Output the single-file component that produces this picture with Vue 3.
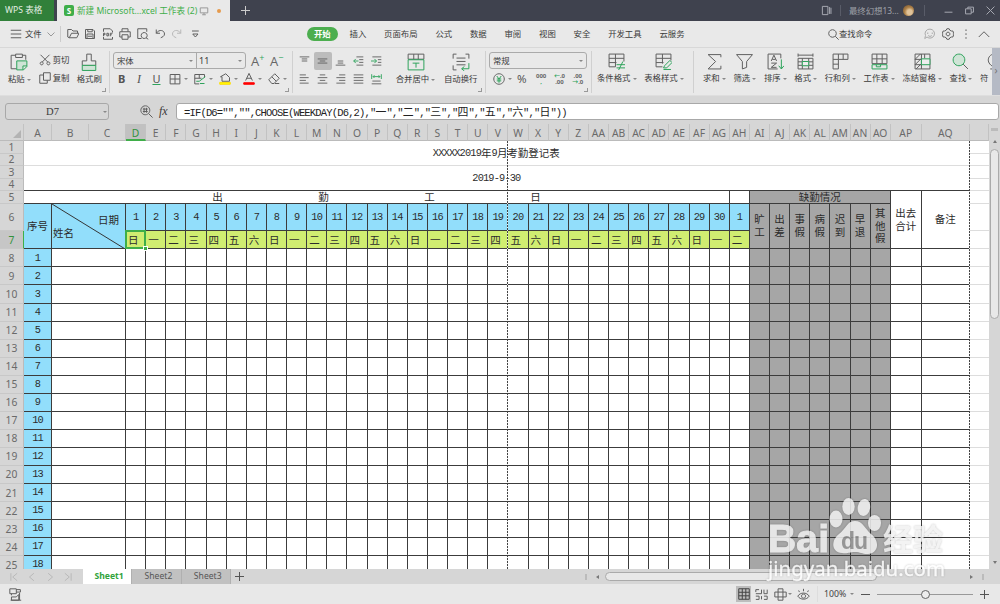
<template>
    <div class="app">
        <header class="title-bar">
            <div class="brand">WPS 表格</div>
            <div class="doc-tab">
                <span class="doc-logo">S</span>
                <span class="doc-name">新建 Microsoft...xcel 工作表 (2)</span>
                <Icon name="monitor" :size="10" />
                <i class="dirty"></i>
            </div>
            <span class="new-tab"></span>
            <div class="window-tools">
                <Icon name="panel" :size="11" />
                <i class="bar"></i>
                <span class="user">最终幻想13...</span>
                <span class="avatar"></span>
                <i class="bar"></i>
                <Icon name="minimize" :size="9" />
                <Icon name="restore" :size="9" />
                <Icon name="close" :size="9" />
            </div>
        </header>

        <nav class="menu">
            <div class="file">
                <Icon name="menu" :size="12" />
                <span>文件</span>
                <Icon name="down" :size="8" />
            </div>
            <div class="quick">
                <Icon v-for="name in quickIcons" :key="name" :name="name" :size="12" />
            </div>
            <div class="menu-tabs">
                <span v-for="tab, index in menuTabs" :key="tab" :class="{ active: index === 0 }">{{ tab }}</span>
            </div>
            <div class="search">
                <Icon name="search" :size="11" />
                <span>查找命令</span>
            </div>
            <div class="menu-right">
                <Icon v-for="name in ['chat', 'gear', 'dots', 'up']" :key="name" :name="name" :size="12" />
            </div>
        </nav>

        <section class="ribbon">
            <div class="group clipboard">
                <div class="big">
                    <Icon name="paste" :size="18" />
                    <span class="label">粘贴<b class="caret"></b></span>
                </div>
                <div class="stack">
                    <span><Icon name="cut" :size="12" />剪切</span>
                    <span><Icon name="copy" :size="12" />复制</span>
                </div>
                <div class="big">
                    <Icon name="brush" :size="18" />
                    <span class="label">格式刷</span>
                </div>
                <i class="corner"></i>
            </div>

            <div class="group fonts">
                <div class="line">
                    <div class="select">
                        <span class="family">宋体<b class="caret"></b></span>
                        <span class="font-size">11<b class="caret"></b></span>
                    </div>
                    <span class="grow">A<sup>+</sup></span>
                    <span class="grow">A<sup>−</sup></span>
                </div>
                <div class="line second">
                    <span class="fmt bold">B</span>
                    <span class="fmt italic">I</span>
                    <span class="fmt under">U</span>
                    <span v-for="name in ['border', 'fillpen', 'bucket', 'fontcolor', 'eraser']" :key="name" class="drop">
                        <Icon :name="name" :size="12" /><b class="caret"></b>
                    </span>
                </div>
                <i class="corner"></i>
            </div>

            <div class="group aligns">
                <div class="align-grid">
                    <span v-for="name in alignIcons" :key="name" :class="{ active: name === 'vmiddle' }">
                        <Icon :name="name" :size="12" />
                    </span>
                </div>
                <div class="big merge">
                    <Icon name="merge" :size="18" />
                    <span class="label">合并居中<b class="caret"></b></span>
                </div>
                <div class="big">
                    <Icon name="wrap" :size="18" />
                    <span class="label">自动换行</span>
                </div>
                <i class="corner"></i>
            </div>

            <div class="group numbers">
                <div class="select number-select"><span>常规<b class="caret"></b></span></div>
                <div class="number-line">
                    <Icon name="yen" :size="12" /><b class="caret"></b>
                    <span class="percent">%</span>
                    <span class="digits"><em class="dark">000</em><em>,</em></span>
                    <span class="digits"><em>←<u>.0</u></em><em class="dark">.00</em></span>
                    <span class="digits"><em class="dark">.00</em><em>→<u>.0</u></em></span>
                </div>
                <i class="corner"></i>
            </div>

            <div class="group styles">
                <div v-for="tool in styleTools" :key="tool.text" class="big tool">
                    <Icon :name="tool.icon" :size="17" />
                    <span class="label">{{ tool.text }}<b class="caret"></b></span>
                </div>
            </div>

            <div class="group edit">
                <div v-for="tool in editTools" :key="tool.text" class="big tool">
                    <Icon :name="tool.icon" :size="17" />
                    <span class="label">{{ tool.text }}<b class="caret"></b></span>
                </div>
                <div class="big cut-off">
                    <Icon name="symbol" :size="17" />
                    <span class="label">符</span>
                </div>
            </div>
            <div class="more">›</div>
        </section>

        <section class="formula-bar">
            <div class="name-box"><span>D7</span><b class="caret"></b></div>
            <Icon name="find" :size="13" />
            <span class="fx">fx</span>
            <div class="formula">
                <span v-for="run, index in runs(formula)" :key="index" :class="run.kind">{{ run.text }}</span>
            </div>
        </section>

        <main class="sheet-area">
            <div class="sheet">
                <div class="col-head select-all"><i></i></div>
                <div v-for="name in columns" :key="name" class="col-head" :class="{ current: name === 'D' }">{{ name }}</div>
                <div class="col-head"></div>

                <div v-for="row in 25" :key="'r' + row" class="row-head" :class="{ current: row === 7 }"
                    :style="area(row, 0)">{{ row }}</div>
                <div v-for="row in 25" :key="'e' + row" class="rest" :style="area(row, 44)"></div>

                <div v-for="cell, index in cells" :key="'c' + index" class="cell" :class="cell.type"
                    :style="area(cell.row, cell.col, cell.rows, cell.cols)">
                    <template v-if="cell.text">
                        <span v-for="run, i in runs(cell.text)" :key="i" :class="run.kind">{{ run.text }}</span>
                    </template>
                </div>

                <div class="cell blue slash" :style="area(6, 2, 2, 2)">
                    <svg viewBox="0 0 73 46" preserveAspectRatio="none">
                        <path d="M0 0L73 46" stroke="#333" fill="none" />
                    </svg>
                    <span class="full date">日期</span>
                    <span class="full name">姓名</span>
                </div>
                <div class="cursor" :style="area(7, 4)"><i></i></div>
                <div class="page-break" :style="area(1, 22, 25, 1)"></div>
                <div class="page-break" :style="area(1, 43, 25, 1)"></div>
            </div>
            <div class="vscroll">
                <i class="split"></i>
                <i class="arrow-up"></i>
                <i class="thumb"></i>
                <i class="arrow-down"></i>
            </div>
        </main>

        <section class="tab-bar">
            <div class="tab-nav">
                <Icon v-for="name in ['first', 'prev', 'next', 'last']" :key="name" :name="name" :size="10" />
            </div>
            <span v-for="n in 3" :key="n" class="sheet-tab" :class="{ active: n === 1 }">Sheet{{ n }}</span>
            <span class="add-sheet"></span>
            <div class="hscroll">
                <i class="grip"></i>
                <i class="arrow-left"></i>
                <i class="thumb"></i>
                <i class="arrow-right"></i>
                <i class="grip"></i>
            </div>
        </section>

        <footer class="status">
            <Icon name="macro" :size="13" />
            <div class="views">
                <span class="active"><Icon name="normal" :size="12" /></span>
                <Icon name="pages" :size="13" />
                <Icon name="layout" :size="13" />
                <b class="caret"></b>
                <Icon name="eye" :size="13" />
            </div>
            <div class="zoom">
                <span>100%</span>
                <b class="caret"></b>
                <i class="minus"></i>
                <div class="slider"><i></i></div>
                <i class="plus"></i>
            </div>
        </footer>

        <svg class="watermark" viewBox="0 0 190 96" width="190" height="96">
            <g fill="#f2f2f2">
                <text x="5" y="62" font-size="39" font-weight="bold" font-family="Liberation Sans, sans-serif"
                    textLength="61" stroke="#f2f2f2">Bai</text>
                <ellipse cx="73" cy="29" rx="6.5" ry="8.5" />
                <ellipse cx="85.500" cy="16.500" rx="6.2" ry="8.5" />
                <ellipse cx="101" cy="17.500" rx="6.2" ry="8.5" transform="rotate(10 101 17)" />
                <ellipse cx="111.500" cy="33" rx="6.5" ry="8" />
                <path d="M92 31C100 31 102 39 108 44C117 51 116 63 105 64C98 64 98 62 92 62C86 62 85 64 79 63C68 62 68 50 76 44C83 39 84 31 92 31Z" />
                <text x="120" y="60" font-size="30" font-weight="bold" font-family="Noto Sans CJK SC, sans-serif"
                    textLength="60">经验</text>
                <text x="5" y="86" font-size="20" font-family="Noto Sans, sans-serif" textLength="177"
                    lengthAdjust="spacingAndGlyphs" fill="#fff" stroke="#fff" stroke-width=".3">jingyan.baidu.com</text>
            </g>
            <text x="78" y="59" font-size="23" font-weight="bold" font-family="Liberation Sans, sans-serif"
                textLength="27" fill="#949494">du</text>
        </svg>
    </div>
</template>

<script setup>
import { h } from 'vue';

const G = '#2fa35c';
const K = '#606060';
const LIGHT = '#b9b9b9';

// each entry is a list of [path, stroke, fill], drawn on a 16x16 box
const icons = {
    monitor: [['M2 3h12v8h-12zM8 11v3M5 14h6', '#999']],
    panel: [['M2 2h8v12h-8zM12.500 3v10M14.500 4v9', '#a5a7b0']],
    minimize: [['M1 11h14', '#a5a7b0']],
    restore: [['M1 5h10v9h-10zM5 5v-3h10v9h-4', '#a5a7b0']],
    close: [['M1 1l14 14M15 1l-14 14', '#a5a7b0']],
    menu: [['M1 3h14M1 8h14M1 13h14', K]],
    down: [['M1 5l7 7l7-7', '#999']],
    up: [['M1 12l7-7l7 7', K]],
    open: [['M3 13l-2-1v-10h5l2 2h6v3M3 13l3-6h10l-3 6z', K]],
    save: [['M2 2h10l2 2v10h-12zM5 2v3h6v-3M4 14v-6h8v6M5 11h6', K]],
    pdf: [['M2 5v-4h9l3 3v2M2 12v3h12v-3', K], ['M2 11v-4h2v2h-2M6.500 7v3.500h2v-3.500zM11 11v-4h3M11 9h2', K]],
    print: [['M4 5v-4h8v4M4 12h-3v-7h14v7h-3M4 9h8v6h-8z', K]],
    preview: [['M6 14h-5v-13h12v4', K], ['M9.500 6a4 4 0 1 0 .1 0M12 13l3 2', K]],
    undo: [['M3 2v5h5M3 7c4-6 11-4 11 1c0 3-3 4-5 5', K]],
    redo: [['M13 2v5h-5M13 7c-4-6-11-4-11 1c0 3 3 4 5 5', LIGHT]],
    custom: [['M4 4h9M5 8l3.500 4l3.500-4z', K]],
    search: [['M6.500 1a5.500 5.500 0 1 0 .1 0M10.500 10.500l5 5', K]],
    chat: [['M8 1.500a6 6 0 1 1-4 10.500l-3 2l1-4a6 6 0 0 1 6-8.500M5 6v2M11 6v2M5.500 10c1.500 1.500 3.500 1.500 5 0', '#aaa']],
    gear: [['M6.500 1h3l1 2l2 1l2 0l1 3l-1 1l1 1l-1 3h-2l-2 1l-1 2h-3l-1-2l-2-1h-2l-1-3l1-1l-1-1l1-3h2l2-1zM8 5.500a2.500 2.500 0 1 0 .1 0', K]],
    dots: [['M8 2v1.800M8 7.200v1.800M8 12.400v1.800', '#444']],
    paste: [['M6 14h-5v-12h4M11 2h3v4M5 1h6v3h-6z', K], ['M6 7h9v5l-3 3h-6zM15 11.500h-3.500v3.500', G, '#cfe4d6']],
    cut: [['M2 1l10 10M14 1l-10 10M3.500 10.500a2 2 0 1 0 .1 0M12.500 10.500a2 2 0 1 0 .1 0', K]],
    copy: [['M6 1h9v10h-9zM6 4h-5v11h10v-4', K]],
    brush: [['M6 7v-6h4v6h4v4h-12v-4z', K], ['M2 11h12v4.500h-12z', G, '#cfe4d6']],
    border: [['M1.500 2h13v12.500h-13zM8 2v12.500M1.500 8h13', K]],
    fillpen: [['M14 6v-4h-13v12.500h6M1 7h9M7 2v5', K], ['M3 11h4l8-6M8 14h6', G]],
    bucket: [['M4 11v-6h-2l7-4l5 5v5z', K], ['M1 12.500h14v2.500h-14z', '#fd0', '#ff0']],
    fontcolor: [['M3.500 10l4.500-9.500l4.500 9.500M5 7h6', K], ['M1 13h14v2h-14z', '#f00', '#f00']],
    eraser: [['M1 9l8-8l6 6l-7 7h-3zM5 5l6 6M9 14h6', K]],
    vtop: [['M1 2h14M4 5h8M4 8h8', K]],
    vmiddle: [['M1 5h14M4 8h8M1 11h14', K]],
    vbottom: [['M4 8h8M4 11h8M1 14h14', K]],
    outdent: [['M5 2h10M9 6h6M9 10h6M5 14h10', K], ['M1 8h7M4 5l-3 3l3 3', G]],
    indent: [['M2 2h13M10 6h5M10 10h5M2 14h13', K], ['M0 8h8M5 5l3 3l-3 3', G]],
    left: [['M1 2h9M1 6h13M1 10h9M1 14h13', K]],
    center: [['M4 2h8M1 6h14M4 10h8M1 14h14', K]],
    right: [['M6 2h9M2 6h13M6 10h9M2 14h13', K]],
    justify: [['M1 2h14M1 6h14M1 10h14M1 14h14', K]],
    spread: [['M2 11h12M1 15h14', K], ['M1 1v7M15 1v7M3 4.500h10M5 2.500l-2 2l2 2M11 2.500l2 2l-2 2', G]],
    merge: [['M1 5.500v-4.500h14v4.500M1 5.500h14M6 1v4.500M10 1v4.500', K], ['M1 6h14v9h-14zM5 9h6M8 9v4', G]],
    wrap: [['M4 1h-3v4M12 1h3v4M1 11v4h3M4 4.500h8M4 7.500h8M4 10.500h8', K], ['M15 9v5h-6M11 12l-2.500 2l2.500 2', G]],
    yen: [['M8 1a7 7 0 1 0 .1 0', K], ['M5 4l3 4l3-4M8 8v5M5 8h6M5 10.500h6', G]],
    cond: [['M7 13h-6v-12h14v7M1 5h14M7 1v12M1 9h7', K], ['M8 11h8M8 14h8M14 8l-4 8', G]],
    style: [['M7 13h-6v-12h14v6M1 5h14M1 9h7M7 1v9', K], ['M9 12l5-5l2 2l-5 5h-3zM8 15.500h7', G]],
    sum: [['M14 4v-2.500h-12l7 6.500l-7 7h12v-3', K]],
    filter: [['M.5 1.500h15l-5.500 6.500v5.500l-4 1.500v-7z', K]],
    sort: [['M10 15h-9v-14h12v4M4 7.500l2.500-5.500l2.500 5.500M5 6h3M4 9.500h5l-5 4h5', K], ['M13.500 6v9M11 12l2.500 3l2.500-3', G]],
    format: [['M1 .5v3M15 .5v3M1 2h14M1 5h14v10h-14zM1 8.300h14M1 11.600h14M5 5v10M11 5v10', K], ['M5 8h6v4h-6z', G, '#eee']],
    rowcol: [['M1 1h14v5h-9v9h-5zM1 6h5v-5M10.500 1v5M1 10.500h5', K]],
    worksheet: [['M1 10v-9h14v9zM1 5.500h14M5.500 1v9M10.500 1v9', K], ['M1 11h14v4h-14zM5 11v2h4v-2', G]],
    freeze: [['M1 1h14v14h-14zM7 1v14M10 1v4M1 6h6M1 11h6M1 6l5-5M1 11l6-6M2 15l5-5', K], ['M7 5.500h8v5.500h-8z', G, '#eee']],
    lookup: [['M10.500 10.500l4.500 4.500', K], ['M6.500 1a5.500 5.500 0 1 0 .1 0', G, '#cfe4d6']],
    symbol: [['M4 15h3v-2c-8-4-5-12 1-12c7 0 9 8 1 12v2h3', K]],
    find: [['M6.500 1a5.500 5.500 0 1 0 .1 0M10.500 10.500l5 5M3.500 5h6M3.500 8h6M5 3.500v6M8 3.500v6', K]],
    first: [['M3 2v12M13 2l-7 6l7 6', LIGHT]],
    prev: [['M11 2l-7 6l7 6', LIGHT]],
    next: [['M5 2l7 6l-7 6', LIGHT]],
    last: [['M13 2v12M3 2l7 6l-7 6', LIGHT]],
    macro: [['M1 1h8v6h-8zM9 2h5v3h-5M3 7v2M3 11h6l3-3v7h-9zM13 6v9M2 15h13', K]],
    normal: [['M1 1h14v14h-14zM1 5.700h14M1 10.400h14M5.700 1v14M10.400 1v14', '#444']],
    pages: [['M1 5v-3h4M8 2v5h-7M11 2v5h4M15 2v5M1 10h4v4h-4M8 10v4M11 10h4v4h-4', K]],
    layout: [['M5 1h6v14h-6zM1 5h14v6h-14z', K]],
    eye: [['M1 10c3-5 11-5 14 0c-3 5-11 5-14 0M8 7.500a2.500 2.500 0 1 0 .1 0M3 5l-1-2M8 4v-3M13 5l1-2', K]]
};

const Icon = (props) => h(
    'svg',
    { viewBox: '0 0 16 16', width: props.size, height: props.size, style: { flex: 'none' } },
    icons[props.name].map(([d, stroke, fill]) => h('path', {
        d,
        stroke,
        fill: fill || 'none',
        'stroke-width': 16 / props.size
    }))
);
Icon.props = ['name', 'size'];

const quickIcons = ['open', 'save', 'pdf', 'print', 'preview', 'undo', 'redo', 'custom'];
const menuTabs = ['开始', '插入', '页面布局', '公式', '数据', '审阅', '视图', '安全', '开发工具', '云服务'];
const alignIcons = ['vtop', 'vmiddle', 'vbottom', 'outdent', 'indent', 'left', 'center', 'right', 'justify', 'spread'];
const styleTools = [
    { text: '条件格式', icon: 'cond' },
    { text: '表格样式', icon: 'style' }
];
const editTools = [
    { text: '求和', icon: 'sum' },
    { text: '筛选', icon: 'filter' },
    { text: '排序', icon: 'sort' },
    { text: '格式', icon: 'format' },
    { text: '行和列', icon: 'rowcol' },
    { text: '工作表', icon: 'worksheet' },
    { text: '冻结窗格', icon: 'freeze' },
    { text: '查找', icon: 'lookup' }
];

const formula = '=IF(D6="","",CHOOSE(WEEKDAY(D6,2),"一","二","三","四","五","六","日"))';
const week = ['日', '一', '二', '三', '四', '五', '六'];

// A..AQ
const columns = Array.from({ length: 43 }, (_, i) => {
    const letter = String.fromCharCode(65 + i % 26);
    return i < 26 ? letter : 'A' + letter;
});

// half-width and full-width characters get different fonts
function runs(text) {
    return (text.match(/[\x20-\x7e]+|[^\x20-\x7e]+/g) || []).map((part) => ({
        text: part,
        kind: part.charCodeAt(0) < 127 ? 'half' : 'full'
    }));
}

function area(row, col, rows = 1, cols = 1) {
    return {
        gridRow: `${row + 1} / span ${rows}`,
        gridColumn: `${col + 1} / span ${cols}`
    };
}

const cells = [
    { row: 1, col: 1, rows: 2, cols: 43, type: 'plain', text: 'XXXXX2019年9月考勤登记表' },
    { row: 3, col: 1, rows: 2, cols: 43, type: '', text: '2019-9-30' },
    { row: 5, col: 1, cols: 33, type: 'spaced', text: '出 勤 工 日' },
    { row: 5, col: 34, type: '' },
    { row: 5, col: 35, cols: 7, type: 'gray', text: '缺勤情况' },
    { row: 5, col: 42, rows: 3, type: 'two', text: '出去合计' },
    { row: 5, col: 43, rows: 3, type: '', text: '备注' },
    { row: 6, col: 1, rows: 2, type: 'blue', text: '序号' }
];
for (let i = 0; i < 31; i++) {
    cells.push({ row: 6, col: 4 + i, type: 'blue', text: String(i === 30 ? 1 : i + 1) });
    cells.push({ row: 7, col: 4 + i, type: 'lime', text: week[i % 7] });
}
['旷工', '出差', '事假', '病假', '迟到', '早退', '其他假'].forEach((text, i) => {
    cells.push({ row: 6, col: 35 + i, rows: 2, type: 'gray vertical', text });
});
for (let row = 8; row <= 25; row++) {
    cells.push({ row, col: 1, type: 'blue', text: String(row - 7) });
    cells.push({ row, col: 2, cols: 2, type: '' });
    for (let col = 4; col <= 43; col++) {
        cells.push({ row, col, type: col >= 35 && col <= 41 ? 'gray' : '' });
    }
}
</script>

<style>
body {
    overflow: hidden;
}
</style>

<style scoped>
.app {
    position: relative;
    width: 1000px;
    height: 604px;
    display: flex;
    flex-direction: column;
    overflow: hidden;
    background: #d6d6d6;
    color: #3a3a3a;
    font-family: "Noto Sans", "Noto Sans CJK SC", sans-serif;
    font-size: 8.4px;
    line-height: 12px;
    white-space: nowrap;
}

.caret {
    display: inline-block;
    flex: none;
    border: 2px solid transparent;
    border-top-color: #888;
    border-bottom: 0;
    vertical-align: middle;
}

/* title bar */
.title-bar {
    height: 21px;
    flex: none;
    display: flex;
    align-items: center;
    background: #3f424e;
}

.brand {
    width: 49px;
    padding-left: 5px;
    line-height: 21px;
    background: #31803a;
    color: #e4efe4;
    font-size: 8.6px;
}

.doc-tab {
    width: 166px;
    height: 21px;
    margin-left: 3px;
    padding-left: 7px;
    display: flex;
    align-items: center;
    background: #e9e9e9;
    color: #3fae49;
    font-size: 8.6px;
}

.doc-logo {
    width: 10px;
    height: 11px;
    margin-right: 3px;
    border-radius: 2px;
    background: #3fae49;
    color: #fff;
    text-align: center;
    font-size: 8px;
    font-weight: bold;
    line-height: 11px;
}

.doc-name {
    width: 122px;
}

.dirty {
    width: 4px;
    height: 4px;
    margin-left: 8px;
    border-radius: 50%;
    background: #e69a4c;
}

.new-tab,
.add-sheet,
.plus {
    width: 9px;
    height: 9px;
    background:
        linear-gradient(#555, #555) center / 9px 1px no-repeat,
        linear-gradient(#555, #555) center / 1px 9px no-repeat;
}

.new-tab {
    margin-left: 11px;
    background:
        linear-gradient(#ccc, #ccc) center / 9px 1px no-repeat,
        linear-gradient(#ccc, #ccc) center / 1px 9px no-repeat;
}

.window-tools {
    margin-left: auto;
    padding-right: 5px;
    display: flex;
    align-items: center;
    color: #a0a2aa;
}

.window-tools .bar {
    width: 1px;
    height: 11px;
    margin: 0 8px;
    background: #595c68;
}

.user {
    width: 54px;
}

.avatar {
    width: 11px;
    height: 11px;
    border-radius: 50%;
    background: radial-gradient(circle at 60% 65%, #e0c39a 0 25%, #ae8248 50%, #69482b);
}

.window-tools .avatar + .bar {
    margin: 0 19px 0 10px;
}

.window-tools svg + svg {
    margin-left: 12px;
}

/* menu row */
.menu {
    height: 26px;
    flex: none;
    display: flex;
    align-items: center;
    background: #e9e9e9;
    border-bottom: 1px solid #d8d8d8;
}

.file {
    width: 50px;
    height: 16px;
    padding-left: 10px;
    display: flex;
    align-items: center;
    gap: 3px;
    border-right: 1px solid #ccc;
}

.file svg:last-child {
    margin-left: 2px;
}

.quick {
    width: 240px;
    padding-left: 6px;
    display: flex;
    gap: 5.4px;
}

.menu-tabs {
    width: 521px;
    display: flex;
    gap: 17.8px;
}

.menu-tabs span {
    padding: 1px 0;
}

.menu-tabs span.active {
    margin-right: -6px;
    padding: 1px 7px;
    border-radius: 8px;
    background: #4cae4f;
    color: #fff;
    font-weight: bold;
}

.search {
    width: 96px;
    display: flex;
    align-items: center;
}

.menu-right {
    display: flex;
    gap: 6px;
}

/* ribbon */
.ribbon {
    height: 47px;
    flex: none;
    display: flex;
    background: #e9e9e9;
    border-bottom: 1px solid #dedede;
    overflow: hidden;
}

.group {
    position: relative;
    box-sizing: border-box;
    flex: none;
    display: flex;
}

.group:not(.edit)::after {
    content: "";
    position: absolute;
    right: 0;
    top: 3px;
    height: 42px;
    border-right: 1px solid #d0d0d0;
}

.corner {
    position: absolute;
    right: 4px;
    bottom: 3px;
    width: 3px;
    height: 3px;
    border: solid #999;
    border-width: 0 1px 1px 0;
}

.big {
    padding-top: 5px;
    display: flex;
    flex-direction: column;
    align-items: center;
}

.label {
    margin-top: 2px;
}

.label .caret {
    margin-left: 2px;
}

.clipboard {
    width: 110px;
    padding-left: 8px;
}

.stack {
    width: 33px;
    margin: 6px 5px 0 8px;
}

.stack span {
    display: flex;
    align-items: center;
    gap: 2px;
    margin-bottom: 6px;
}

.fonts {
    width: 183px;
    flex-direction: column;
    padding: 4px 0 0 3px;
}

.line {
    display: flex;
    align-items: center;
}

.select {
    box-sizing: border-box;
    width: 133px;
    height: 17px;
    display: flex;
    border: 1px solid #aaa;
    border-radius: 3px;
    line-height: 15px;
}

.select span {
    flex: 1;
    display: flex;
    align-items: center;
    justify-content: space-between;
    padding: 0 3px;
}

.select .font-size {
    flex: none;
    width: 43px;
    border-left: 1px solid #aaa;
    padding-left: 2px;
    font-size: 9px;
}

.grow {
    width: 14px;
    margin-left: 5px;
    font: 13px/14px "Open Sans", sans-serif;
    color: #666;
}

.grow sup {
    color: #2fa35c;
    font-size: 9px;
    line-height: 1px;
    vertical-align: 5px;
}

.second {
    margin-top: 3px;
    height: 14px;
    padding-left: 1px;
}

.fmt {
    width: 17.4px;
    text-align: center;
    font-size: 11px;
    color: #555;
}

.bold {
    margin-left: -1px;
    font-weight: bold;
}

.italic {
    font-family: "Liberation Serif", serif;
    font-size: 12px;
    font-style: italic;
}

.under {
    text-decoration: underline #2fa35c;
}

.drop {
    width: 24.7px;
    display: flex;
    align-items: center;
    gap: 3px;
}

.fmt + .drop {
    margin-left: 4px;
}

.aligns {
    width: 193px;
}

.align-grid {
    width: 89px;
    height: 36px;
    margin: 4px 13px 0 3px;
    display: grid;
    grid-template-columns: repeat(5, 17.8px);
    grid-template-rows: 18px 18px;
}

.align-grid span {
    display: flex;
    align-items: center;
    justify-content: center;
}

.align-grid .active {
    border-radius: 2px;
    background: #bcbcbc;
}

.align-grid svg {
    width: 11px;
}

.merge {
    width: 39px;
    margin-right: 9px;
    margin-left: -2px;
}

.numbers {
    width: 106px;
    flex-direction: column;
    padding: 4px 0 0 3px;
}

.number-select {
    width: 98px;
}

.number-line {
    margin-top: 3px;
    height: 14px;
    padding-left: 4px;
    display: flex;
    align-items: center;
}

.number-line > .caret {
    margin: 0 5px 0 3px;
}

.percent {
    width: 15px;
    font-size: 11.5px;
    color: #555;
}

.digits {
    width: 18.3px;
    font-size: 6px;
    font-weight: bold;
    line-height: 6px;
    text-align: center;
    color: #2fa35c;
}

.digits em {
    display: block;
    font-style: normal;
}

.digits u {
    color: #666;
    text-decoration: none;
}

.digits .dark {
    color: #666;
}

.styles {
    width: 102px;
    padding-left: 5px;
}

.tool {
    margin-right: 7.7px;
}

.cut-off .label {
    margin-top: 2px;
}

.cut-off svg {
    margin-left: 6px;
}

.cut-off {
    align-items: flex-start;
}

.edit {
    width: 298px;
    padding-left: 9px;
    overflow: hidden;
}

.more {
    flex: 1;
    background: #b5bac5;
    color: #777;
    text-align: center;
    line-height: 44px;
    height: 47px;
    font-size: 10px;
}

/* formula bar */
.formula-bar {
    height: 28px;
    flex: none;
    display: flex;
    align-items: center;
    padding-left: 5px;
    padding-top: 3px;
    box-sizing: border-box;
}

.name-box,
.formula {
    box-sizing: border-box;
    height: 17px;
    border: 1px solid #a8a8a8;
    border-radius: 3px;
}

.name-box {
    width: 104px;
    margin-right: 31px;
    display: flex;
    align-items: center;
    padding-right: 1px;
    font: 10.5px "Liberation Serif", serif;
}

.name-box span {
    flex: 1;
    text-align: center;
    padding-right: 4px;
}

.fx {
    width: 17px;
    margin-left: 6px;
    font: italic 12px "Liberation Serif", serif;
}

.formula {
    flex: 1;
    margin-right: 1px;
    padding-left: 7px;
    background: #fff;
    color: #222;
    line-height: 14px;
}

.half {
    font-family: "Liberation Mono", monospace;
    font-size: 10.3px;
    letter-spacing: -0.83px;
}

.full {
    font-family: "Noto Sans CJK SC", sans-serif;
    font-size: 10.5px;
}

.formula .half {
    font-size: 10.5px;
}

.formula .full {
    font-size: 10.9px;
}

/* sheet */
.sheet-area {
    height: 445px;
    flex: none;
    display: flex;
    overflow: hidden;
}

.sheet {
    width: 989px;
    height: 445px;
    flex: none;
    display: grid;
    grid-template-columns: 24px 28px 37px 37px repeat(38, 20.14px) 31px 48px 19px;
    grid-template-rows: 17px repeat(5, 12.5px) 27.7px 18.2px repeat(18, 18.05px);
    overflow: hidden;
    background: #fff;
}

.col-head,
.row-head {
    box-sizing: border-box;
    min-width: 0;
    display: flex;
    align-items: center;
    justify-content: center;
    background: #d6d6d6;
    color: #6a6a6a;
    font-size: 10.3px;
}

.col-head {
    padding-top: 2px;
    border-right: 1px solid #c2c2c2;
    border-bottom: 1px solid #bbb;
}

.row-head {
    border-right: 1px solid #bbb;
    border-bottom: 1px solid #c8c8c8;
}

.col-head.current {
    background: #c1c1c1;
    color: #31913c;
    border-bottom: 2px solid #3fae49;
}

.row-head.current {
    background: #c6c6c6;
    color: #31913c;
    border-right-color: #3fae49;
}

.select-all {
    justify-content: flex-end;
    align-items: flex-end;
}

.select-all i {
    margin: 0 2px 2px 0;
    border: 4px solid #b3b3b3;
    border-top-color: transparent;
    border-left-color: transparent;
}

.rest {
    border-bottom: 1px solid #ddd;
}

.cell {
    box-sizing: border-box;
    min-width: 0;
    display: flex;
    align-items: center;
    justify-content: center;
    border-right: 1px solid #3c3c3c;
    border-bottom: 1px solid #3c3c3c;
    color: #2c2c2c;
    line-height: 12.5px;
}

.plain {
    border-bottom-color: #ddd;
}

.blue {
    background: #92defb;
}

.lime {
    justify-content: flex-start;
    padding-left: 2px;
    background: #d0ed71;
}

.gray {
    background: #a6a6a6;
}

.spaced .half {
    width: 95.500px;
}

.two {
    white-space: normal;
}

.two .full {
    width: 21px;
}

.vertical .full {
    width: 10.5px;
    white-space: normal;
}

.slash {
    position: relative;
}

.slash svg {
    position: absolute;
    left: 0;
    top: 0;
    width: 100%;
    height: 100%;
}

.slash .full {
    position: absolute;
}

.date {
    right: 6px;
    top: 10px;
}

.name {
    left: 1px;
    top: 23px;
}

.cursor {
    position: relative;
    margin: -1px 0 0 -1px;
    border: 2px solid #3fae49;
    z-index: 2;
}

.cursor i {
    position: absolute;
    right: -4px;
    bottom: -4px;
    width: 3px;
    height: 3px;
    background: #3fae49;
    border: 1px solid #fff;
}

.page-break {
    z-index: 1;
    background: linear-gradient(#444 2px, #eee 2px) right top / 1px 3px repeat-y;
}

.vscroll {
    width: 11px;
    display: flex;
    flex-direction: column;
    align-items: center;
}

.vscroll .split {
    width: 7px;
    height: 3px;
    margin: 4px 0 9px;
    background: #bbb;
}

.arrow-up,
.arrow-down,
.arrow-left,
.arrow-right {
    border: 2px solid transparent;
}

.arrow-up {
    border-bottom: 3px solid #777;
    border-top: 0;
}

.arrow-down {
    margin-top: auto;
    margin-bottom: 5px;
    border-top: 3px solid #777;
    border-bottom: 0;
}

.arrow-left {
    border-right: 3px solid #777;
    border-left: 0;
}

.arrow-right {
    border-left: 3px solid #777;
    border-right: 0;
}

.thumb {
    box-sizing: border-box;
    background: #e8e8e8;
    border: 1px solid #aaa;
    border-radius: 5px;
}

.vscroll .thumb {
    width: 9px;
    height: 170px;
    margin-top: 6px;
}

/* sheet tabs */
.tab-bar {
    height: 15px;
    flex: none;
    display: flex;
    align-items: center;
}

.tab-nav {
    width: 74px;
    padding-left: 9px;
    display: flex;
    gap: 8px;
}

.sheet-tab {
    box-sizing: border-box;
    width: 49.3px;
    height: 15px;
    padding-left: 4px;
    border-right: 1px solid #b0b0b0;
    background: #c1c1c1;
    color: #555;
    text-align: center;
    font-size: 8.6px;
    line-height: 15px;
}

.sheet-tab.active {
    background: #fff;
    color: #31a33c;
    font-weight: bold;
}

.add-sheet {
    margin-left: 4px;
}

.hscroll {
    margin-left: auto;
    margin-right: 16px;
    display: flex;
    align-items: center;
}

.hscroll .grip {
    width: 2px;
    height: 6px;
    background: #bbb;
}

.hscroll .arrow-left {
    margin: 0 6px 0 9px;
}

.hscroll .thumb {
    width: 272px;
    height: 9px;
}

.hscroll .arrow-right {
    margin: 0 9px 0 93px;
}

/* status bar */
.status {
    height: 20px;
    flex: none;
    display: flex;
    align-items: center;
    padding-left: 9px;
    background: #e8e8e8;
}

.views {
    margin-left: auto;
    width: 81px;
    display: flex;
    align-items: center;
    border-right: 1px solid #ddd;
}

.views .active {
    width: 15px;
    height: 16px;
    margin-right: 4px;
    display: flex;
    align-items: center;
    justify-content: center;
    background: #bdbdbd;
}

.views svg + svg {
    margin-left: 6px;
}

.views .caret {
    margin: 0 5px 0 1px;
}

.zoom {
    width: 176px;
    padding-left: 6px;
    display: flex;
    align-items: center;
    color: #444;
    font-size: 8.7px;
}

.zoom span {
    width: 26px;
}

.zoom .minus {
    width: 9px;
    height: 1px;
    margin: 0 7px;
    background: #555;
}

.slider {
    width: 96px;
    height: 1px;
    margin-right: 7px;
    display: flex;
    align-items: center;
    justify-content: center;
    background: #999;
}

.slider i {
    width: 7px;
    height: 7px;
    flex: none;
    border: 1px solid #666;
    border-radius: 50%;
    background: #eee;
}

.watermark {
    position: absolute;
    left: 763px;
    top: 490px;
    opacity: .85;
    filter: drop-shadow(0 0 1px rgba(0, 0, 0, .25));
    z-index: 5;
}
</style>
